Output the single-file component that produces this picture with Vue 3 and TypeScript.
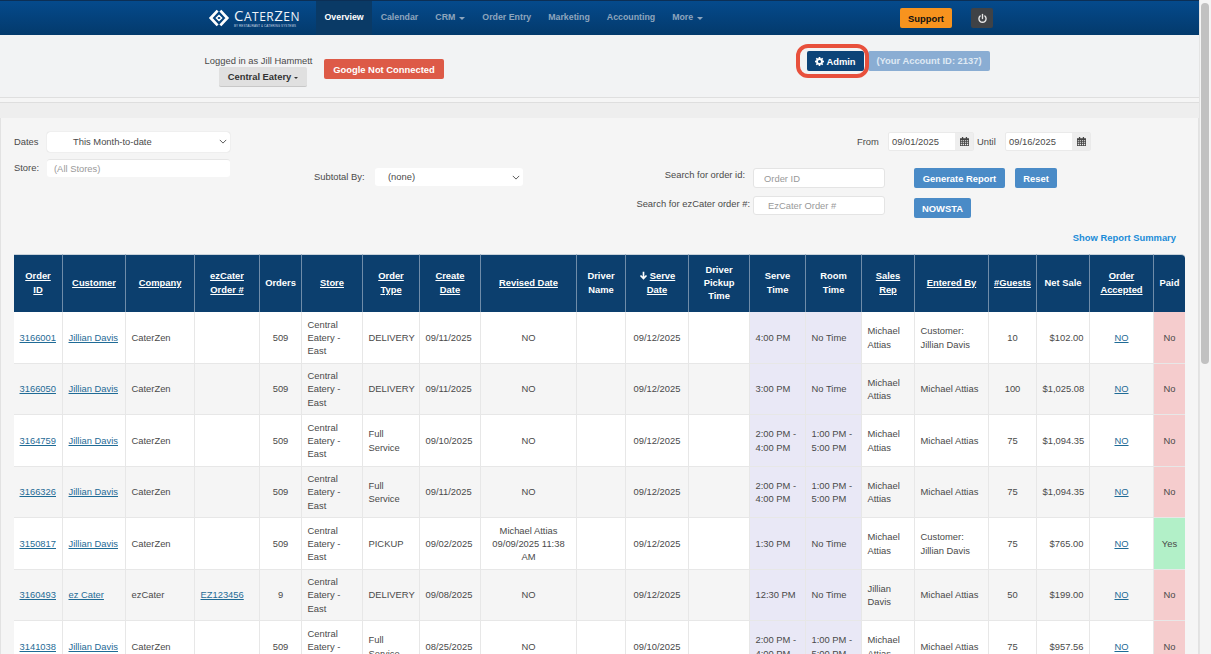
<script setup lang="ts">
interface Column { label: string; width: number; link?: boolean; sort?: boolean }
interface Row {
  id: string; customer: string; company: string; ez: string; orders: string; type: string;
  created: string; revised: string; serve: string; time: string; room: string; rep: string;
  entered: string; guests: string; net: string; paid: string
}

const columns: Column[] = [
  { label: 'Order ID', width: 49, link: true },
  { label: 'Customer', width: 63, link: true },
  { label: 'Company', width: 69, link: true },
  { label: 'ezCater Order #', width: 65, link: true },
  { label: 'Orders', width: 42 },
  { label: 'Store', width: 61, link: true },
  { label: 'Order Type', width: 57, link: true },
  { label: 'Create Date', width: 61, link: true },
  { label: 'Revised Date', width: 96, link: true },
  { label: 'Driver Name', width: 49 },
  { label: 'Serve Date', width: 63, link: true, sort: true },
  { label: 'Driver Pickup Time', width: 61 },
  { label: 'Serve Time', width: 56 },
  { label: 'Room Time', width: 56 },
  { label: 'Sales Rep', width: 53, link: true },
  { label: 'Entered By', width: 74, link: true },
  { label: '#Guests', width: 48, link: true },
  { label: 'Net Sale', width: 53 },
  { label: 'Order Accepted', width: 64, link: true },
  { label: 'Paid', width: 31 }
]

const navItems = [
  { label: 'Overview', active: true },
  { label: 'Calendar' },
  { label: 'CRM', caret: true },
  { label: 'Order Entry' },
  { label: 'Marketing' },
  { label: 'Accounting' },
  { label: 'More', caret: true }
]

const rows: Row[] = [
  { id: '3166001', customer: 'Jillian Davis', company: 'CaterZen', ez: '', orders: '509', type: 'DELIVERY', created: '09/11/2025', revised: 'NO', serve: '09/12/2025', time: '4:00 PM', room: 'No Time', rep: 'Michael Attias', entered: 'Customer: Jillian Davis', guests: '10', net: '$102.00', paid: 'No' },
  { id: '3166050', customer: 'Jillian Davis', company: 'CaterZen', ez: '', orders: '509', type: 'DELIVERY', created: '09/11/2025', revised: 'NO', serve: '09/12/2025', time: '3:00 PM', room: 'No Time', rep: 'Michael Attias', entered: 'Michael Attias', guests: '100', net: '$1,025.08', paid: 'No' },
  { id: '3164759', customer: 'Jillian Davis', company: 'CaterZen', ez: '', orders: '509', type: 'Full Service', created: '09/10/2025', revised: 'NO', serve: '09/12/2025', time: '2:00 PM - 4:00 PM', room: '1:00 PM - 5:00 PM', rep: 'Michael Attias', entered: 'Michael Attias', guests: '75', net: '$1,094.35', paid: 'No' },
  { id: '3166326', customer: 'Jillian Davis', company: 'CaterZen', ez: '', orders: '509', type: 'Full Service', created: '09/11/2025', revised: 'NO', serve: '09/12/2025', time: '2:00 PM - 4:00 PM', room: '1:00 PM - 5:00 PM', rep: 'Michael Attias', entered: 'Michael Attias', guests: '75', net: '$1,094.35', paid: 'No' },
  { id: '3150817', customer: 'Jillian Davis', company: 'CaterZen', ez: '', orders: '509', type: 'PICKUP', created: '09/02/2025', revised: 'Michael Attias 09/09/2025 11:38 AM', serve: '09/12/2025', time: '1:30 PM', room: 'No Time', rep: 'Michael Attias', entered: 'Customer: Jillian Davis', guests: '75', net: '$765.00', paid: 'Yes' },
  { id: '3160493', customer: 'ez Cater', company: 'ezCater', ez: 'EZ123456', orders: '9', type: 'DELIVERY', created: '09/08/2025', revised: 'NO', serve: '09/12/2025', time: '12:30 PM', room: 'No Time', rep: 'Jillian Davis', entered: 'Michael Attias', guests: '50', net: '$199.00', paid: 'No' },
  { id: '3141038', customer: 'Jillian Davis', company: 'CaterZen', ez: '', orders: '509', type: 'Full Service', created: '08/25/2025', revised: 'NO', serve: '09/10/2025', time: '2:00 PM - 4:00 PM', room: '1:00 PM - 5:00 PM', rep: 'Michael Attias', entered: 'Michael Attias', guests: '75', net: '$957.56', paid: 'No' }
]
</script>

<template>
  <div class="window">
    <div class="page">
      <header class="nav">
        <div class="logo">
          <svg class="logo-mark" viewBox="0 0 24 24" width="22" height="22" fill="none" stroke="#fff" stroke-width="3">
            <path d="M10.5 4 3 12l7.5 8" />
            <path d="M13.5 4 21 12l-7.5 8" />
            <path d="M12 9.2 14.8 12 12 14.8 9.2 12z" stroke-width="1.6" />
          </svg>
          <div class="logo-text">
            <span class="logo-name"><b>C</b>ATER<b>Z</b>EN</span>
            <span class="logo-sub">BY RESTAURANT &amp; CATERING SYSTEMS</span>
          </div>
        </div>
        <nav class="menu">
          <a v-for="item in navItems" :key="item.label" class="menu-item" :class="{ active: item.active }">
            {{ item.label }}<i v-if="item.caret" class="caret" />
          </a>
        </nav>
        <button class="support">Support</button>
        <button class="power" aria-label="Log out">
          <svg viewBox="0 0 16 16" width="11" height="11" fill="none" stroke="#e8e8e8" stroke-width="2" stroke-linecap="round">
            <path d="M8 2v6" />
            <path d="M4.6 4.4a5.2 5.2 0 1 0 6.8 0" />
          </svg>
        </button>
      </header>

      <section class="subheader">
        <div class="login">
          <span>Logged in as Jill Hammett</span>
          <button class="store-btn">Central Eatery<i class="caret dark" /></button>
        </div>
        <button class="google">Google Not Connected</button>
        <div class="account">
          <button class="admin">
            <svg viewBox="0 0 16 16" width="9" height="9" fill="#fff">
              <path fill-rule="evenodd" d="M6.7 0h2.6l.4 2.2 1.2.5 1.9-1.3 1.8 1.8-1.3 1.9.5 1.2 2.2.4v2.6l-2.2.4-.5 1.2 1.3 1.9-1.8 1.8-1.9-1.3-1.2.5-.4 2.2H6.7l-.4-2.2-1.2-.5-1.9 1.3-1.8-1.8 1.3-1.9-.5-1.2L0 9.3V6.7l2.2-.4.5-1.2-1.3-1.9 1.8-1.8 1.9 1.3 1.2-.5zM8 5.2a2.8 2.8 0 1 0 0 5.6 2.8 2.8 0 0 0 0-5.6z" />
            </svg>
            Admin
          </button>
          <span class="account-id">(Your Account ID: 2137)</span>
          <span class="ring" />
        </div>
      </section>
      <div class="band" />

      <main class="panel">
        <div class="filters">
          <div class="col-dates">
            <div class="line">
              <label class="lbl-dates">Dates</label>
              <div class="select date-select">
                <span>This Month-to-date</span>
                <svg viewBox="0 0 10 6" width="8" height="5" fill="none" stroke="#555" stroke-width="1.2"><path d="M1 1l4 4 4-4" /></svg>
              </div>
            </div>
            <div class="line store-line">
              <label class="lbl-dates">Store:</label>
              <input class="input store-input" placeholder="(All Stores)" />
            </div>
          </div>

          <div class="col-subtotal">
            <label>Subtotal By:</label>
            <div class="select subtotal-select">
              <span>(none)</span>
              <svg viewBox="0 0 10 6" width="8" height="5" fill="none" stroke="#555" stroke-width="1.2"><path d="M1 1l4 4 4-4" /></svg>
            </div>
          </div>

          <div class="col-search">
            <div class="date-row">
              <label>From</label>
              <div class="date-field">
                <span>09/01/2025</span>
                <i class="addon">
                  <svg viewBox="0 0 14 14" width="9" height="9" fill="#444"><path fill-rule="evenodd" d="M3 0h2v2h4V0h2v2h3v12H0V2h3zM1.2 5v1.8H3V5zm3 0v1.8h2V5zm3.4 0v1.8h2V5zm3.2 0v1.8h2V5zM1.2 8v1.8H3V8zm3 0v1.8h2V8zm3.4 0v1.8h2V8zm3.2 0v1.8h2V8zM1.2 11v1.8H3V11zm3 0v1.8h2V11zm3.4 0v1.8h2V11zm3.2 0v1.8h2V11z" /></svg>
                </i>
              </div>
              <label class="until">Until</label>
              <div class="date-field">
                <span>09/16/2025</span>
                <i class="addon">
                  <svg viewBox="0 0 14 14" width="9" height="9" fill="#444"><path fill-rule="evenodd" d="M3 0h2v2h4V0h2v2h3v12H0V2h3zM1.2 5v1.8H3V5zm3 0v1.8h2V5zm3.4 0v1.8h2V5zm3.2 0v1.8h2V5zM1.2 8v1.8H3V8zm3 0v1.8h2V8zm3.4 0v1.8h2V8zm3.2 0v1.8h2V8zM1.2 11v1.8H3V11zm3 0v1.8h2V11zm3.4 0v1.8h2V11zm3.2 0v1.8h2V11z" /></svg>
                </i>
              </div>
            </div>
            <div class="search-row">
              <label class="search-label">Search for order id:</label>
              <input class="input search-input first" placeholder="Order ID" />
              <button class="btn-blue gen">Generate Report</button>
              <button class="btn-blue reset">Reset</button>
            </div>
            <div class="search-row second">
              <label class="search-label">Search for ezCater order #:</label>
              <input class="input search-input ez" placeholder="EzCater Order #" />
              <button class="btn-blue gen nowsta">NOWSTA</button>
            </div>
          </div>
        </div>

        <div class="summary"><a>Show Report Summary</a></div>

        <table class="report">
          <colgroup>
            <col v-for="c in columns" :key="c.label" :style="{ width: c.width + 'px' }" />
          </colgroup>
          <thead>
            <tr>
              <th v-for="c in columns" :key="c.label">
                <svg v-if="c.sort" class="sort" viewBox="0 0 12 12" width="9" height="9" fill="none" stroke="#fff" stroke-width="2.2"><path d="M6 1v9M2 6l4 4 4-4" /></svg>
                <a v-if="c.link">{{ c.label }}</a>
                <template v-else>{{ c.label }}</template>
              </th>
            </tr>
          </thead>
          <tbody>
            <tr v-for="r in rows" :key="r.id">
              <td><a>{{ r.id }}</a></td>
              <td><a>{{ r.customer }}</a></td>
              <td>{{ r.company }}</td>
              <td><a>{{ r.ez }}</a></td>
              <td class="c">{{ r.orders }}</td>
              <td>Central Eatery - East</td>
              <td>{{ r.type }}</td>
              <td>{{ r.created }}</td>
              <td class="c">{{ r.revised }}</td>
              <td />
              <td class="c">{{ r.serve }}</td>
              <td />
              <td class="lav">{{ r.time }}</td>
              <td class="lav">{{ r.room }}</td>
              <td>{{ r.rep }}</td>
              <td>{{ r.entered }}</td>
              <td class="c">{{ r.guests }}</td>
              <td class="r">{{ r.net }}</td>
              <td class="c"><a>NO</a></td>
              <td class="c" :class="r.paid === 'Yes' ? 'yes' : 'no'">{{ r.paid }}</td>
            </tr>
          </tbody>
        </table>
      </main>
    </div>
    <aside class="scrollbar"><span class="thumb" /></aside>
  </div>
</template>

<style>
html, body { margin: 0; overflow: hidden; background: #f5f5f5; }
</style>

<style scoped>
.window {
  display: flex;
  width: 1211px;
  height: 654px;
  overflow: hidden;
  font-family: "Liberation Sans", Arial, sans-serif;
  font-size: 9.4px;
  line-height: 13.33px;
  color: #4a4a4a;
}
.page { width: 1199px; flex: none; display: flex; flex-direction: column; }
button { font-family: inherit; cursor: pointer; padding: 0; }

.scrollbar { width: 12px; flex: none; background: #f4f4f4; border-left: 1px solid #e4e4e4; box-sizing: border-box; padding: 3px 2px 0 1px; }
.thumb { display: block; height: 361px; border-radius: 4px; background: #c1c1c1; }

.nav {
  height: 35px;
  flex: none;
  display: flex;
  align-items: center;
  padding-left: 208px;
  box-sizing: border-box;
  background: linear-gradient(#054a8c, #033a6c);
  border-top: 1px solid #0c2f55;
}
.logo { display: flex; align-items: center; width: 108px; flex: none; }
.logo-mark { flex: none; }
.logo-text { display: flex; flex-direction: column; margin-left: 4px; margin-top: -1px; color: #fff; }
.logo-name { font-size: 12px; line-height: 14px; letter-spacing: 0.5px; font-family: "Open Sans", "Liberation Sans", sans-serif; color: #eef3f8; white-space: nowrap; }
.logo-name b { font-size: 15px; font-weight: 400; }
.logo-sub { font-size: 3px; line-height: 4px; letter-spacing: 0.1px; white-space: nowrap; color: #c8d5e3; }
.menu { display: flex; align-self: stretch; flex: 1; }
.menu-item {
  display: flex;
  align-items: center;
  padding: 0 8.5px;
  font-size: 8.8px;
  font-weight: 700;
  color: #8ea5bd;
  white-space: nowrap;
}
.menu-item.active { color: #fff; background: #0a3a66; }
.caret {
  display: inline-block;
  width: 0;
  height: 0;
  margin-left: 4px;
  border-left: 3px solid transparent;
  border-right: 3px solid transparent;
  border-top: 3px solid #8ea5bd;
}
.caret.dark { margin-left: 3px; border-left-width: 2.5px; border-right-width: 2.5px; border-top: 2.5px solid #333; vertical-align: 1px; }
.support {
  width: 52px;
  height: 20px;
  margin-right: 19px;
  border: 0;
  border-radius: 2px;
  background: #f7931e;
  color: #111;
  font-size: 9.4px;
  font-weight: 700;
}
.power {
  width: 22px;
  height: 20px;
  margin-right: 206px;
  border: 0;
  border-radius: 2px;
  background: #3f4246;
  display: flex;
  align-items: center;
  justify-content: center;
}

.subheader {
  height: 63px;
  flex: none;
  display: flex;
  box-sizing: border-box;
  padding-left: 206px;
  background: #f2f3f4;
  border-bottom: 1px solid #dfdfdf;
}
.login { display: flex; flex-direction: column; align-items: center; width: 105px; padding-top: 19px; white-space: nowrap; }
.store-btn {
  width: 88px;
  height: 20px;
  margin-left: 9px;
  border: 0;
  border-radius: 2px;
  background: #e0e0e0;
  border-bottom: 1px solid #c8c8c8;
  color: #333;
  font-size: 9.4px;
  font-weight: 700;
}
.google {
  align-self: flex-start;
  width: 120px;
  height: 20px;
  margin: 24px 0 0 13px;
  border: 0;
  border-radius: 2px;
  background: #dd5a47;
  color: #fff;
  font-size: 9.4px;
  font-weight: 700;
}
.account { position: relative; display: flex; gap: 4px; align-self: flex-start; margin: 16px 0 0 363px; }
.admin {
  width: 57px;
  height: 20px;
  border: 0;
  border-radius: 2px;
  background: #0d4478;
  color: #fff;
  font-size: 9.4px;
  font-weight: 700;
  display: flex;
  align-items: center;
  justify-content: center;
  gap: 2px;
}
.account-id {
  width: 122px;
  height: 20px;
  box-sizing: border-box;
  border-radius: 2px;
  background: #8aadd3;
  color: #dfe9f3;
  font-weight: 700;
  line-height: 20px;
  text-align: center;
}
.ring {
  position: absolute;
  left: -11px;
  top: -7px;
  width: 73px;
  height: 34px;
  box-sizing: border-box;
  border: 4px solid #e8503c;
  border-radius: 12px;
}

.band {
  height: 20px;
  flex: none;
  box-sizing: border-box;
  background: #eeeeee;
  border-top: 4px solid #f5f5f5;
  box-shadow: inset 0 1px 0 #dedede;
}

.panel {
  flex: 1;
  min-height: 0;
  box-sizing: border-box;
  padding: 14px 0 0 13px;
  background: #f5f5f5;
  border-left: 1px solid #e2e2e2;
  border-right: 1px solid #e2e2e2;
}
.filters { display: flex; height: 93px; }
.col-dates { width: 216px; flex: none; }
.line { display: flex; align-items: center; }
.lbl-dates { width: 33px; flex: none; padding-bottom: 1px; }
.select {
  display: flex;
  align-items: center;
  justify-content: space-between;
  box-sizing: border-box;
  background: #fff;
  border-radius: 3px;
  padding-right: 3px;
}
.date-select { width: 183px; height: 20px; padding-left: 26px; padding-bottom: 1px; box-shadow: 0 0 1px #bbb; }
.store-line { margin-top: 7px; }
.input {
  box-sizing: border-box;
  background: #fff;
  border: 0;
  border-top: 1px solid #e6e6e6;
  border-radius: 3px;
  outline: 0;
  font: inherit;
  color: #444;
}
.input::placeholder { color: #999; opacity: 1; }
.store-input { width: 183px; height: 18px; padding: 0 0 1px 7px; }
.col-subtotal { display: flex; align-items: center; align-self: flex-start; margin: 36px 0 0 84px; }
.col-subtotal label { width: 61px; }
.subtotal-select { width: 148px; height: 18px; padding-left: 13px; }
.col-search { flex: 1; min-width: 0; }
.date-row { display: flex; align-items: center; height: 19px; margin-left: 334px; white-space: nowrap; }
.date-row label { width: 31px; flex: none; }
.date-row .until { width: 28px; margin-left: 3px; }
.date-field {
  display: flex;
  align-items: center;
  width: 86px;
  height: 19px;
  box-sizing: border-box;
  background: #fff;
  border: 1px solid #eaeaea;
  border-radius: 2px;
  padding-left: 3px;
}
.date-field span { flex: 1; }
.addon { display: flex; align-items: center; justify-content: center; width: 18px; height: 17px; background: #eeeeee; }
.search-row { display: flex; align-items: center; margin-top: 17px; height: 20px; white-space: nowrap; }
.search-row.second { margin-top: 10px; }
.search-label { width: 222px; text-align: right; flex: none; margin-top: -6px; }
.search-row.second .search-label { width: 227px; margin-top: -8px; }
.search-input { width: 132px; height: 20px; padding-left: 10px; border: 1px solid #e4e4e4; }
.search-input.first { margin-left: 8px; }
.search-input.ez { height: 19px; padding-left: 14px; margin-top: -6px; margin-left: 3px; }
.btn-blue {
  height: 20px;
  border: 0;
  border-radius: 2px;
  background: #4a8bc7;
  color: #fff;
  font-size: 9.4px;
  font-weight: 700;
}
.gen { width: 91px; margin-left: 29px; }
.reset { width: 42px; margin-left: 10px; }
.nowsta { width: 57px; }
.summary { height: 29px; margin-right: 22px; text-align: right; font-weight: 700; color: #1a8cd8; line-height: 26px; }

.report {
  width: 1171px;
  table-layout: fixed;
  border-collapse: separate;
  border-spacing: 0;
  font-size: 9.4px;
  line-height: 13.33px;
}
.report th {
  height: 58px;
  padding: 0 4px 2px;
  box-sizing: border-box;
  background: #0c3f6e;
  border-top: 1px solid #c9d2da;
  border-right: 1px solid #6f8ca9;
  color: #fff;
  font-weight: 700;
  text-align: center;
  vertical-align: middle;
}
.report th:first-child { padding: 0 8px 2px; }
.report th:last-child { border-right: 0; border-top-right-radius: 4px; }
.report th a { text-decoration: underline; }
.sort { vertical-align: -1px; margin-right: 2px; }
.report td {
  padding: 4px 5.5px;
  height: 52px;
  box-sizing: border-box;
  border-right: 1px solid #e7e7e7;
  border-bottom: 1px solid #e7e7e7;
  background: #fff;
  color: #4a4a4a;
  vertical-align: middle;
}
.report td:last-child { border-right: 0; }
.report tbody tr:nth-child(even) td { background: #f5f5f5; height: 51px; }
.report td a { color: #1f6b96; text-decoration: underline; }
.report td.c { text-align: center; }
.report td.r { text-align: right; }
.report tbody tr td.lav { background: #e9e8f6; }
.report tbody tr td.no { background: #f5cccd; }
.report tbody tr td.yes { background: #b2f0c8; }
</style>
